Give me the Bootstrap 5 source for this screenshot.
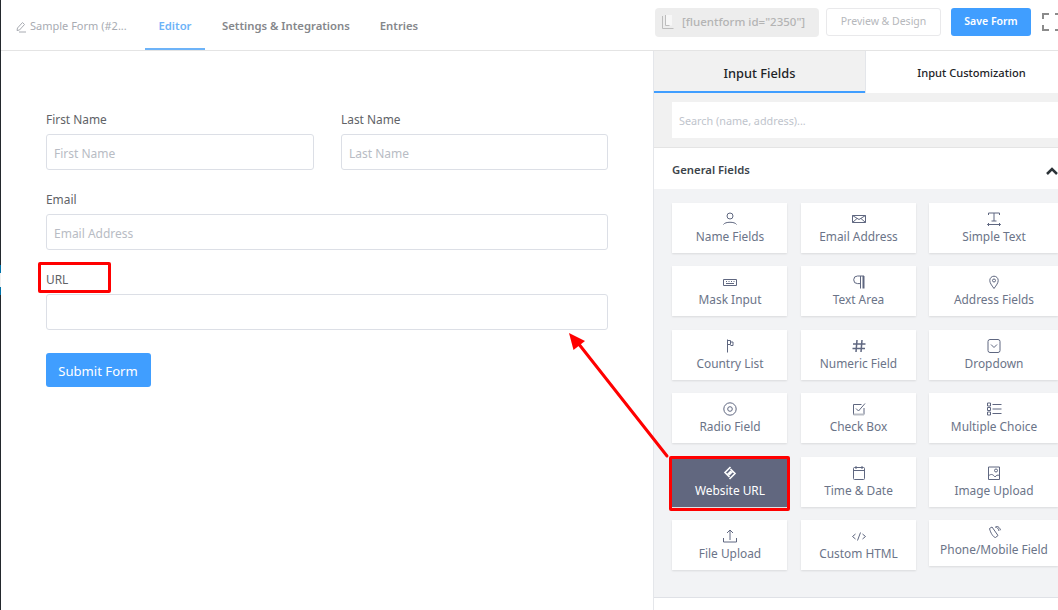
<!DOCTYPE html>
<html lang="en">
  <head>
    <meta charset="UTF-8" />
    <meta name="viewport" content="width=device-width, initial-scale=1.0" />
    <title>Fluent Forms Editor</title>
    <link href="https://cdn.jsdelivr.net/npm/bootstrap@5.3.0/dist/css/bootstrap.min.css" rel="stylesheet" />
    <style>
      html, body { height: 100%; overflow: hidden; }
      body { font-family: "Noto Sans", "Open Sans", sans-serif; font-size: 12px; color: #606266; background: #fff; }
      .app-shell { width: 1058px; height: 610px; position: relative; overflow: hidden; }
      .admin-edge { width: 1px; flex: none; background: #23282d; }
      .edge-gap { height: 265px; }
      .edge-blue { height: 8px; background: #0073aa; }
      .edge-white { height: 14px; background: #f1f1f1; }
      .edge-rest { flex: 1; }
      .main-col { width: 1057px; flex: none; }
      .top-bar { height: 51px; flex: none; border-bottom: 1px solid #e4e4e4; }
      .form-name { width: 144px; padding: 3px 0 0 14px; color: #a8abb2; font-size: 11px; }
      .form-name svg { margin-right: 3px; }
      .top-tab { display: flex; align-items: center; justify-content: center; height: 50px; padding: 3px 13px 0; margin-right: 4px; font-size: 11.3px; font-weight: 600; color: #85878b; }
      .top-tab-active { width: 60px; padding: 5px 0 0; color: #6db3f8; border-bottom: 2px solid #6db3f8; }
      .top-actions { margin-bottom: 6px; }
      .short-code { width: 164px; height: 29px; margin-right: 7px; padding-left: 6px; border-radius: 4px; background: #ededed; color: #b4b4b4; font-size: 11.5px; font-weight: 500; white-space: nowrap; }
      .short-code svg { margin-right: 7px; flex: none; }
      .btn-preview { width: 115px; height: 28px; margin-right: 10px; padding: 0; border: 1px solid #e9e9eb; border-radius: 3px; background: #fff; color: #b6b8bc; font-size: 10.5px; }
      .btn-save { width: 80px; height: 28px; margin-right: 11px; padding: 0; border: 0; border-radius: 3px; background: #409eff; color: #fff; font-size: 10.5px; font-weight: 600; }
      .form-area { width: 652px; flex: none; padding: 60px 45px 0 45px; }
      .field-label { display: block; margin-bottom: 6px; height: 17px; line-height: 17px; color: #606266; font-size: 11.9px; }
      .field-input { display: block; width: 100%; height: 36px; padding: 2px 7px 0; border: 1px solid #dcdfe6; border-radius: 3px; background: #fff; color: #606266; font-size: 12px; }
      .field-input::placeholder { color: #b8bcc4; }
      .field-wrap { margin-bottom: 21px; }
      .name-grid { display: grid; grid-template-columns: 268px 267px; column-gap: 27px; }
      .btn-submit { width: 105px; height: 34px; margin-top: 2px; padding: 3px 1px 0 0; border: 0; border-radius: 3px; background: #409eff; color: #fff; font-size: 13.1px; font-weight: 400; }
      .side-panel { width: 405px; flex: none; border-left: 1px solid #e4e6ea; }
      .side-tab { height: 42px; display: flex; align-items: center; justify-content: center; font-weight: 500; color: #1d2327; flex: none; }
      .side-tab-on { width: 211px; background: #f1f1f1; border-bottom: 2px solid #409eff; font-size: 12.8px; padding-top: 5px; }
      .side-tab-off { width: 212px; border-left: 1px solid #e4e6ea; font-size: 11.1px; padding-top: 2px; }
      .search-row { height: 55px; padding: 9px 0 9px 18px; background: #f1f1f1; border-bottom: 1px solid #e4e4e4; }
      .search-box { display: block; width: 100%; height: 36px; padding: 0 7px; border: 0; background: #fff; font-size: 10.8px; }
      .search-box::placeholder { color: #c0c4cc; }
      .group-head { height: 41px; padding: 4px 0 0 18px; font-size: 11.3px; font-weight: 600; color: #3c434a; }
      .group-head svg { margin-left: auto; margin-right: 0; }
      .field-grid { display: grid; grid-template-columns: 115px 115px 129px; gap: 13.4px 13.5px; align-items: start; align-content: start; height: 409px; padding: 14px 0 0 18px; background: #f2f3f5; border-bottom: 1px solid #dfe1e6; }
      .field-card { height: 50px; background: #fff; box-shadow: 0 1px 2px rgba(0, 0, 0, .1); color: #6b7488; font-size: 11.9px; line-height: 15px; text-align: center; padding: 9px 0 0 1px; white-space: nowrap; }
      .field-card svg { display: block; margin: 0 auto 3px; stroke: #5f6780; fill: none; }
      .field-card-short { height: 46px; padding-top: 5px; }
      .field-card-short svg { margin: 1px auto 2px; }
      .field-card-active { position: relative; background: #61677f; color: #fff; }
      .field-card-active svg { stroke: #fff; }
      .mark-box { position: absolute; border: 3px solid #f00; border-radius: 2px; }
      .mark-url { left: 38px; top: 262px; width: 73px; height: 31px; }
      .mark-card { left: 669px; top: 456px; width: 121px; height: 55px; }
      .mark-arrow { position: absolute; left: 560px; top: 325px; }
    </style>
  </head>
  <body>
    <div class="app-shell d-flex">
      <div class="admin-edge d-flex flex-column">
        <div class="edge-gap"></div>
        <div class="edge-blue"></div>
        <div class="edge-white"></div>
        <div class="edge-blue"></div>
        <div class="edge-rest"></div>
      </div>
      <div class="main-col d-flex flex-column">
        <!-- top bar -->
        <div class="top-bar d-flex align-items-center">
          <div class="form-name d-flex align-items-center text-nowrap">
            <svg width="12" height="12" viewBox="0 0 12 12" fill="none" stroke="#a8abb2" stroke-width="1"><path d="M2 9.500 2.500 7 7.500 1.500 9.500 3.500 4.500 9ZM4 11h7"/></svg>
            Sample Form (#2...
          </div>
          <div class="top-tab top-tab-active">Editor</div>
          <div class="top-tab">Settings &amp; Integrations</div>
          <div class="top-tab">Entries</div>
          <div class="top-actions ms-auto d-flex align-items-center">
            <div class="short-code d-flex align-items-center">
              <svg width="14" height="16" viewBox="0 0 14 16" fill="none" stroke="#bdbdbd"><path d="M1.500 2v12.500h11"/><path d="M4.500 1h6.500v10.500h-6.500z" fill="#f7f7f7" stroke="none"/><path d="M4.500 1v10.500h4"/></svg>
              [fluentform id="2350"]
            </div>
            <button class="btn-preview">Preview &amp; Design</button>
            <button class="btn-save">Save Form</button>
            <svg width="16" height="20" viewBox="0 0 16 20" fill="none" stroke="#8b8b8b" stroke-width="2"><path d="M1 7V2h6M1 13v5h6M13 2h3M13 18h3"/></svg>
          </div>
        </div>

        <div class="flex-grow-1 d-flex">
          <!-- form preview -->
          <form class="form-area" onsubmit="return false">
            <div class="name-grid">
              <div class="field-wrap">
                <label class="field-label">First Name</label>
                <input class="field-input" placeholder="First Name" />
              </div>
              <div class="field-wrap">
                <label class="field-label">Last Name</label>
                <input class="field-input" placeholder="Last Name" />
              </div>
            </div>
            <div class="field-wrap">
              <label class="field-label">Email</label>
              <input class="field-input" placeholder="Email Address" />
            </div>
            <div class="field-wrap">
              <label class="field-label">URL</label>
              <input class="field-input" />
            </div>
            <button class="btn-submit">Submit Form</button>
          </form>

          <!-- field picker -->
          <div class="side-panel">
            <div class="d-flex">
              <div class="side-tab side-tab-on">Input Fields</div>
              <div class="side-tab side-tab-off">Input Customization</div>
            </div>
            <div class="search-row">
              <input class="search-box" placeholder="Search (name, address)..." />
            </div>
            <div class="group-head d-flex align-items-center">
              General Fields
              <svg width="12" height="8" viewBox="0 0 12 8" fill="none" stroke="#2c3338" stroke-width="2.500"><path d="M1 7 6 2 11 7"/></svg>
            </div>
            <div class="field-grid">
              <div class="field-card"><svg width="16" height="14" viewBox="0 0 16 14"><circle cx="8" cy="4" r="3"/><path d="M1.500 12.500C3 9.500 13 9.500 14.500 12.500"/></svg>Name Fields</div>
              <div class="field-card"><svg width="16" height="14" viewBox="0 0 16 14"><path d="M1.500 3.500h13v7h-13zM1.500 3.500 8 7.500 14.500 3.500M1.500 10.500 6 6.500M14.500 10.500 10 6.500"/></svg>Email Address</div>
              <div class="field-card"><svg width="16" height="14" viewBox="0 0 16 14"><path d="M2.500 3V1h11v2M8 1v8M5.500 9h5M1.500 12.500h13M3 11 1.500 12.500 3 14M13 11l1.500 1.500L13 14"/></svg>Simple Text</div>
              <div class="field-card"><svg width="16" height="14" viewBox="0 0 16 14"><path d="M1.500 4.500h13v6h-13zM4 6.500h1M6.500 6.500h1M9 6.500h1M11.500 6.500h1M4 8.500h8"/></svg>Mask Input</div>
              <div class="field-card"><svg width="16" height="14" viewBox="0 0 16 14"><path d="M13 1H6.500a3.800 3.800 0 0 0 0 7.600h3"/><path d="M9.500 1v12.500"/><path d="M12.500 1v12.500" stroke-width="2"/></svg>Text Area</div>
              <div class="field-card"><svg width="16" height="14" viewBox="0 0 16 14"><path d="M8 13.500C5.500 10 3.800 8 3.800 5.400a4.200 4.200 0 0 1 8.400 0C12.200 8 10.500 10 8 13.500Z"/><circle cx="8" cy="5.500" r="1.500"/></svg>Address Fields</div>
              <div class="field-card"><svg width="16" height="14" viewBox="0 0 16 14"><path d="M5.500 .5v13M5.500 1.500h3v4h-3M8.500 3h2.500v3.500h-2.500"/></svg>Country List</div>
              <div class="field-card"><svg width="16" height="14" viewBox="0 0 16 14" stroke-width="1.500"><path d="M6 1 5 13M11 1l-1 12M2 5h12.500M1.500 9.500H14"/></svg>Numeric Field</div>
              <div class="field-card"><svg width="16" height="14" viewBox="0 0 16 14"><rect x="2" y=".5" width="12" height="13" rx="2"/><path d="M5 5.500 8 8.500 11 5.500"/></svg>Dropdown</div>
              <div class="field-card"><svg width="16" height="14" viewBox="0 0 16 14"><circle cx="8" cy="7" r="6.200"/><circle cx="8" cy="7" r="2.300"/></svg>Radio Field</div>
              <div class="field-card"><svg width="16" height="14" viewBox="0 0 16 14"><path d="M13 6v6.500H2.500v-10h8M5 6.500 7.500 9 14 1.500"/><path d="M2.500 12.500h10.500" stroke="#b8bcc4" stroke-width="2"/></svg>Check Box</div>
              <div class="field-card"><svg width="16" height="14" viewBox="0 0 16 14"><path d="M1.500 1h3v3h-3zM1.500 5.500h3v3h-3zM1.500 10h3v3h-3zM6.500 2.500h9M6.500 7h9M6.500 11.500h9"/></svg>Multiple Choice</div>
              <div class="field-card field-card-active"><svg width="16" height="14" viewBox="0 0 16 14" stroke-width="1.600"><path d="M8.500 1 3 6.500l4.500 4.500M5.500 8.500 9 5M7.500 13 13 7.500 8.500 3M10.500 5.500 7 9"/></svg>Website URL</div>
              <div class="field-card"><svg width="16" height="14" viewBox="0 0 16 14"><rect x="2.500" y="1.500" width="11" height="12" rx="1"/><path d="M2.500 4.500h11M5 0v3M11 0v3"/></svg>Time &amp; Date</div>
              <div class="field-card"><svg width="16" height="14" viewBox="0 0 16 14"><path d="M2.500 1h11v12.500h-11zM2.500 10c3-3 5-1 6.500 1 1-1.500 2.500-2.500 4.500-1.500"/><circle cx="10" cy="4.500" r="1.500"/></svg>Image Upload</div>
              <div class="field-card"><svg width="16" height="14" viewBox="0 0 16 14"><path d="M1.500 9v4h13V9M8 11V1M5 4l3-3 3 3"/></svg>File Upload</div>
              <div class="field-card"><svg width="16" height="14" viewBox="0 0 16 14"><path d="M4.500 5 1.500 7.500 4.500 10M11.500 5l3 2.500-3 2.500M9.500 3.500l-3 8"/></svg>Custom HTML</div>
              <div class="field-card field-card-short"><svg width="16" height="14" viewBox="0 0 16 14"><path d="M3.500 2.500 6 1l6 8.500-2.500 2c-2 0-5-4.500-6-9ZM9 1c2 0 3.500 1.500 4 4M10 .2c2.500 0 4 2 4.500 4"/></svg>Phone/Mobile Field</div>
            </div>
          </div>
        </div>
      </div>

      <!-- annotations drawn over the screenshot -->
      <div class="mark-box mark-url"></div>
      <div class="mark-box mark-card"></div>
      <svg class="mark-arrow" width="112" height="135" viewBox="560 325 112 135">
        <path d="M667 456 578 343" fill="none" stroke="#f00" stroke-width="3" stroke-linecap="round"/>
        <path d="M569 333 585 341 573.500 350Z" fill="#f00"/>
      </svg>
    </div>
    <script src="https://cdn.jsdelivr.net/npm/bootstrap@5.3.0/dist/js/bootstrap.bundle.min.js"></script>
  </body>
</html>
